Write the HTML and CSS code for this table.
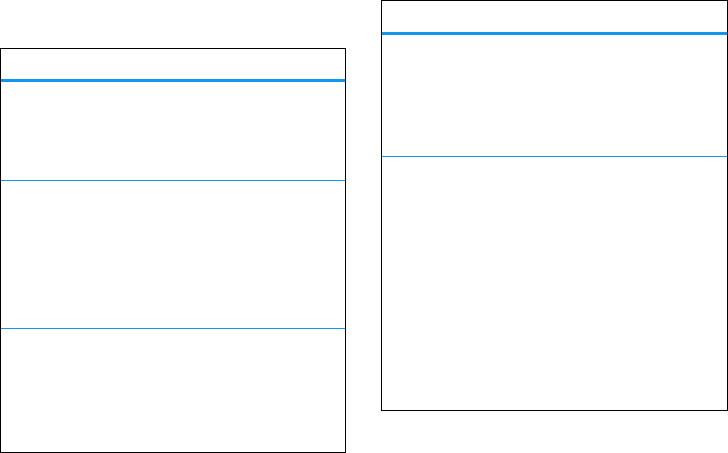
FILE: index.html
```html
<!DOCTYPE html>
<html lang="en">
<head>
    <meta charset="UTF-8">
    <meta name="viewport" content="width=device-width, initial-scale=1.0">
    <title>Tables</title>
    <link rel="stylesheet" href="styles.css">
</head>
<body>
    <div class="page">
        <div class="table table-left">
            <div class="head"></div>
            <div class="row row-a"></div>
            <div class="row row-b"></div>
            <div class="row row-c"></div>
        </div>

        <div class="table table-right">
            <div class="head head-tall"></div>
            <div class="row row-d"></div>
            <div class="row row-e"></div>
        </div>
    </div>
</body>
</html>
```

FILE: styles.css
```css
body {
    margin: 0;
    background-color: #fff;
    font-family: "Liberation Sans", Arial, sans-serif;
}
.page {
    display: flex;
    align-items: flex-start;
    gap: 35px;
}
.table {
    border: 1px solid #000;
    box-sizing: border-box;
}
.table-left {
    width: 346px;
    margin-top: 48px;
}
.table-right {
    width: 347px;
}
.head {
    height: 30px;
    border-bottom: 3px solid #1296f0;
}
.head-tall {
    height: 31px;
}
.row {
    border-bottom: 1px solid #1296f0;
}
.row:last-child {
    border-bottom: none;
}
.row-a { height: 98px; }
.row-b { height: 147px; }
.row-c { height: 123px; }
.row-d { height: 121px; }
.row-e { height: 253px; }
```
